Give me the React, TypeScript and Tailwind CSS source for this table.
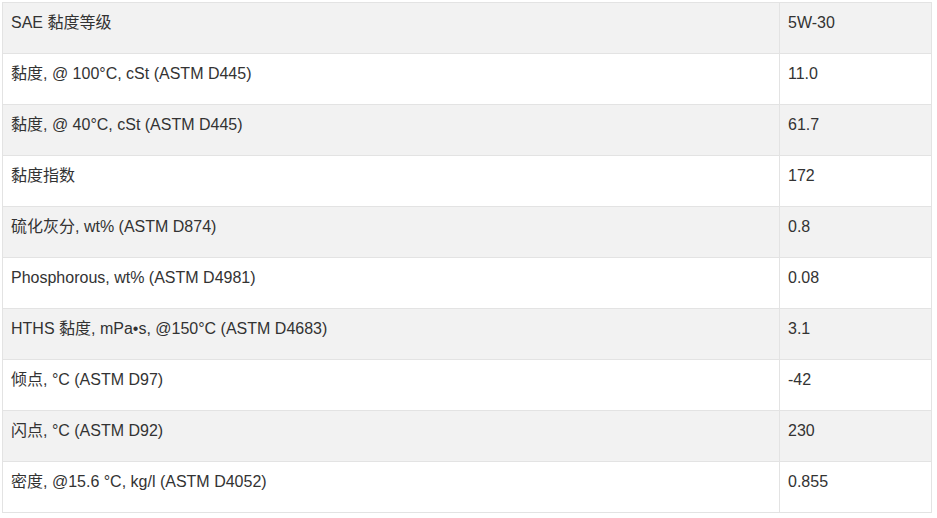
import React from "react";

type Row = { label: string; value: string };

const rows: Row[] = [
  { label: "SAE 黏度等级", value: "5W-30" },
  { label: "黏度, @ 100°C, cSt (ASTM D445)", value: "11.0" },
  { label: "黏度, @ 40°C, cSt (ASTM D445)", value: "61.7" },
  { label: "黏度指数", value: "172" },
  { label: "硫化灰分, wt% (ASTM D874)", value: "0.8" },
  { label: "Phosphorous, wt% (ASTM D4981)", value: "0.08" },
  { label: "HTHS 黏度, mPa•s, @150°C (ASTM D4683)", value: "3.1" },
  { label: "倾点, °C (ASTM D97)", value: "-42" },
  { label: "闪点, °C (ASTM D92)", value: "230" },
  { label: "密度, @15.6 °C, kg/l (ASTM D4052)", value: "0.855" },
];

export default function App() {
  return (
    <div className="w-[937px] h-[518px] bg-white pl-[2px] pt-[2px]">
      <table
        className="w-[930px] border-collapse text-[16px] leading-[22px] text-[#333333]"
        style={{ fontFamily: '"Liberation Sans", Arial, "Noto Sans CJK SC", sans-serif' }}
      >
        <tbody>
          {rows.map((row, i) => (
            <tr key={i} className={i % 2 === 0 ? "bg-[#f2f2f2]" : "bg-white"}>
              <td className="h-[51px] w-[777px] border border-[#e3e3e3] px-2 pt-[9px] pb-[19px] align-top">
                {row.label}
              </td>
              <td className="h-[51px] border border-[#e3e3e3] px-2 pt-[9px] pb-[19px] align-top">
                {row.value}
              </td>
            </tr>
          ))}
        </tbody>
      </table>
    </div>
  );
}
